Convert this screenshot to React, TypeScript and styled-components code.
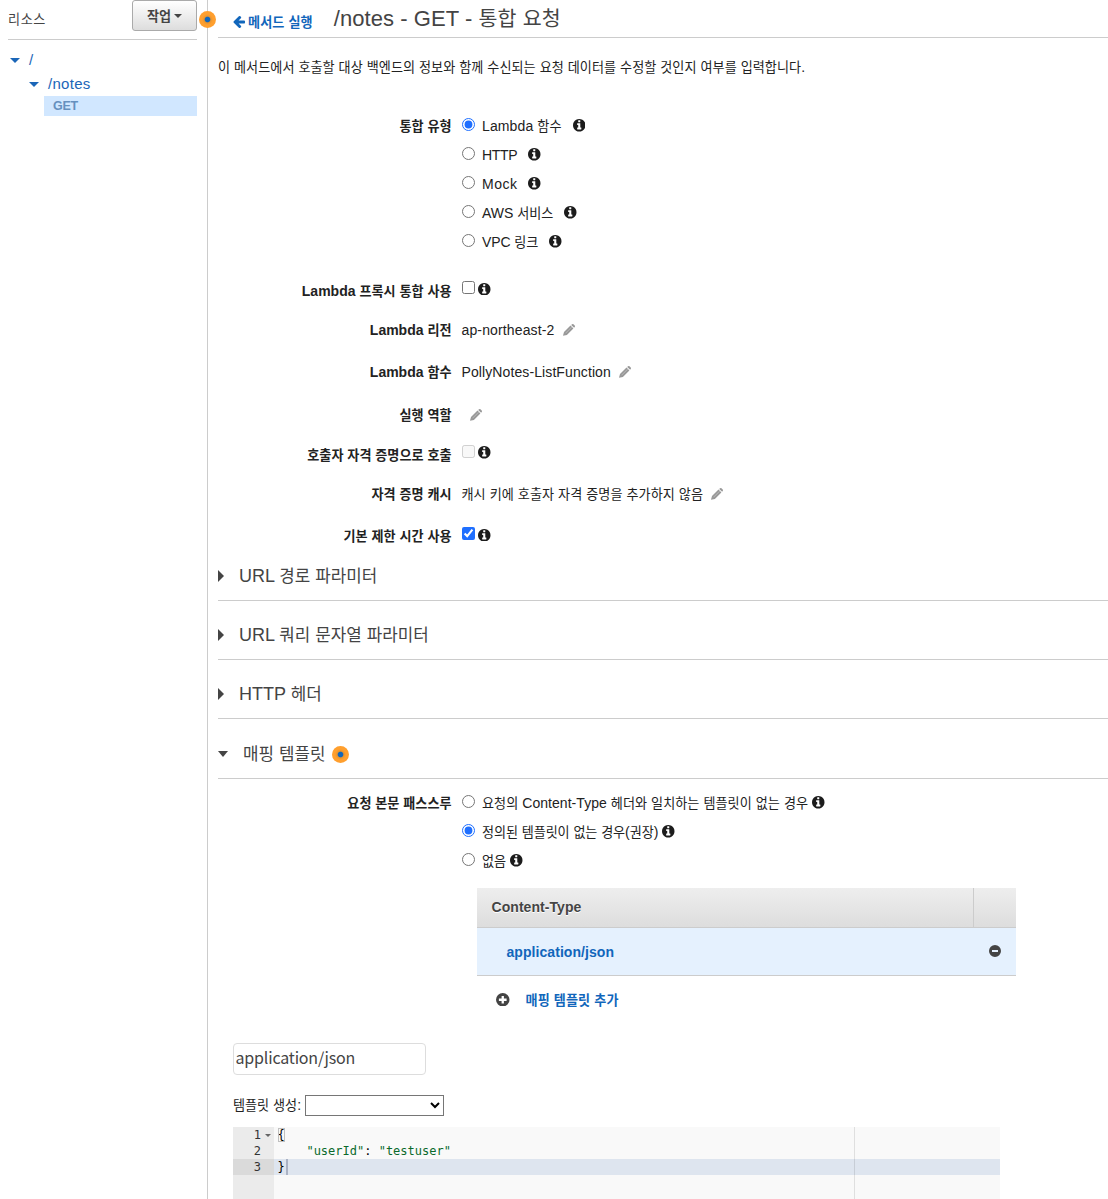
import React from "react";
import styled, { createGlobalStyle, css } from "styled-components";

const GlobalStyle = createGlobalStyle`
  * { box-sizing: border-box; }
  body {
    margin: 0;
    overflow: hidden;
    background: #fff;
    color: #222;
    font-family: "Liberation Sans", "Noto Sans CJK KR", sans-serif;
    font-size: 14px;
    line-height: 20px;
  }
`;

/* Hangul is set slightly smaller than the Latin text around it. */
const Hangul = styled.span`
  font-family: "Noto Sans CJK KR", sans-serif;
  font-size: 0.936em;
  line-height: 1;
`;

const Run = styled.span<{ $spacing?: number }>`
  white-space: pre;
  letter-spacing: ${(p) => p.$spacing ?? 0}px;
`;

function Text({ children, spacing }: { children: string; spacing?: number }) {
  const parts = children.split(/([\uac00-\ud7a3]+)/).filter(Boolean);
  return (
    <Run $spacing={spacing}>
      {parts.map((part, i) =>
        /[\uac00-\ud7a3]/.test(part) ? <Hangul key={i}>{part}</Hangul> : <React.Fragment key={i}>{part}</React.Fragment>
      )}
    </Run>
  );
}

const Icon = styled.svg<{ $size: number; $color?: string }>`
  display: block;
  flex: none;
  width: ${(p) => p.$size}px;
  height: ${(p) => p.$size}px;
  fill: ${(p) => p.$color ?? "currentColor"};
`;

function InfoIcon() {
  return (
    <Icon $size={12.5} $color="#1c1c1c" viewBox="128 128 1536 1536">
      <path d="M1152 1376v-160q0-14-9-23t-23-9h-96v-512q0-14-9-23t-23-9h-320q-14 0-23 9t-9 23v160q0 14 9 23t23 9h96v320h-96q-14 0-23 9t-9 23v160q0 14 9 23t23 9h448q14 0 23-9t9-23zM1024 480v-160q0-14-9-23t-23-9h-192q-14 0-23 9t-9 23v160q0 14 9 23t23 9h192q14 0 23-9t9-23zM1664 896q0 209-103 385.5t-279.5 279.5-385.5 103-385.5-103-279.5-279.5-103-385.5 103-385.5 279.5-279.5 385.5-103 385.5 103 279.5 279.5 103 385.5z" />
    </Icon>
  );
}

function ArrowLeftIcon() {
  return (
    <Icon $size={14} viewBox="0 0 1792 1792">
      <path d="M1664 896v128q0 53-32.5 90.5t-84.5 37.5h-704l293 294q38 36 38 90t-38 90l-75 76q-37 37-90 37-52 0-91-37l-651-652q-37-37-37-90 0-52 37-91l651-650q38-38 91-38 52 0 90 38l75 74q38 38 38 91t-38 91l-293 293h704q52 0 84.5 37.5t32.5 90.5z" transform="translate(0 -64)" />
    </Icon>
  );
}

function PencilIcon() {
  return (
    <Icon $size={12} $color="#999" viewBox="0 0 12 12">
      <path d="M0 11.8 1 8 7.5 1.6 10.4 4.5 3.9 10.9Z" />
      <path d="M8.2.9 9 .3q.8-.6 1.5 0l1.2 1.2q.6.7 0 1.5l-.6.8Z" />
      <path d="M2.6 9.2 8.6 3.2" stroke="#c4c4c4" strokeWidth="0.7" fill="none" />
    </Icon>
  );
}

function RemoveIcon() {
  return (
    <Icon $size={12} $color="#444" viewBox="0 0 12 12">
      <path fillRule="evenodd" d="M6 0a6 6 0 1 1 0 12A6 6 0 0 1 6 0ZM3 4.9v2.2h6V4.9Z" />
    </Icon>
  );
}

function AddIcon() {
  return (
    <Icon $size={13.5} $color="#444" viewBox="0 0 14 14">
      <path fillRule="evenodd" d="M7 0a7 7 0 1 1 0 14A7 7 0 0 1 7 0ZM5.8 3v2.8H3v2.4h2.8V11h2.4V8.2H11V5.8H8.2V3Z" />
    </Icon>
  );
}

const Page = styled.div`
  display: flex;
  height: 1199px;
  overflow: hidden;
`;

const Sidebar = styled.aside`
  position: relative;
  width: 208px;
  flex: none;
  padding: 0 10px 0 8px;
  border-right: 1px solid #ccc;
`;

const SidebarHeader = styled.div`
  display: flex;
  justify-content: space-between;
  align-items: flex-start;
  height: 40px;
  border-bottom: 1px solid #ccc;
  color: #444;
`;

const SidebarTitle = styled.span`
  padding-top: 9px;
`;

const ActionButton = styled.button`
  display: flex;
  align-items: center;
  justify-content: center;
  gap: 3px;
  width: 65px;
  height: 31px;
  padding: 0;
  border: 1px solid #aaa;
  border-radius: 3px;
  background: linear-gradient(#fff, #ddd);
  color: #444;
  font: bold 14px/20px "Liberation Sans", sans-serif;
`;

const Caret = styled.span<{ $dir: "down" | "right"; $w: number; $h: number }>`
  width: 0;
  height: 0;
  flex: none;
  ${(p) =>
    p.$dir === "down"
      ? css`
          border-left: ${p.$w / 2}px solid transparent;
          border-right: ${p.$w / 2}px solid transparent;
          border-top: ${p.$h}px solid currentColor;
        `
      : css`
          border-top: ${p.$h / 2}px solid transparent;
          border-bottom: ${p.$h / 2}px solid transparent;
          border-left: ${p.$w}px solid currentColor;
        `}
`;

const Dot = styled.span`
  display: block;
  width: 17px;
  height: 17px;
  border-radius: 50%;
  background: radial-gradient(circle, #1166bb 2.3px, #e8942e 3.3px, #ff9f2e 5.5px);
`;

const ResizeDot = styled(Dot)`
  position: absolute;
  top: 11px;
  right: -9px;
`;

const Tree = styled.nav`
  display: flex;
  flex-direction: column;
  padding-top: 8px;
  color: #1b66b8;
`;

const TreeItem = styled.div<{ $indent: number }>`
  display: flex;
  align-items: center;
  gap: 9px;
  height: 24px;
  padding-left: ${(p) => p.$indent}px;
  font-size: 15px;
`;

const Method = styled.div`
  height: 20px;
  margin-left: 36px;
  padding-left: 9px;
  background: #d1e7ff;
  color: #6690be;
  font-size: 12.5px;
  font-weight: bold;
  letter-spacing: -0.3px;
`;

const Main = styled.main`
  flex: 1;
  min-width: 0;
  padding-left: 10px;
`;

const PageHeader = styled.header`
  display: flex;
  align-items: center;
  height: 38px;
  padding-left: 14px;
  border-bottom: 1px solid #ccc;
`;

const BackLink = styled.a`
  display: flex;
  align-items: center;
  gap: 2px;
  padding-top: 6px;
  color: #1166bb;
  font-weight: bold;
`;

const Title = styled.h1`
  margin: 0 0 0 21px;
  color: #444;
  font-size: 22px;
  font-weight: normal;
  line-height: 38px;
`;

const Intro = styled.p`
  height: 73px;
  margin: 0;
  padding-top: 19px;
`;

const Field = styled.div<{ $h?: number; $top?: number }>`
  display: grid;
  grid-template-columns: 233.5px 1fr;
  column-gap: 10px;
  align-items: center;
  height: ${(p) => (p.$h ? `${p.$h}px` : "auto")};
  margin-top: ${(p) => p.$top ?? 0}px;
`;

const GroupField = styled(Field)`
  align-items: start;
`;

const Label = styled.div<{ $line?: number }>`
  text-align: right;
  font-weight: bold;
  line-height: ${(p) => p.$line ?? 20}px;
`;

const Value = styled.div<{ $gap?: number }>`
  display: flex;
  align-items: center;
  gap: ${(p) => p.$gap ?? 8}px;
  height: 20px;
`;

const CheckValue = styled(Value)<{ $lift: number }>`
  padding-bottom: ${(p) => p.$lift}px;
`;

const RadioRow = styled.label<{ $gap: number }>`
  display: flex;
  align-items: center;
  gap: ${(p) => p.$gap}px;
  height: 29px;
`;

const Choice = styled.input`
  flex: none;
  width: 13px;
  height: 13px;
  margin: 0;
  accent-color: #1f6fff;
`;

const RadioChoice = styled(Choice)`
  margin: 0 0 2px;
`;

const RadioText = styled.span<{ $gap: number }>`
  margin-left: ${(p) => 7.5 - p.$gap}px;
`;

const CheckInfo = styled.span`
  margin-top: 3px;
`;

const Section = styled.h2<{ $top: number; $gap: number }>`
  display: flex;
  align-items: center;
  gap: ${(p) => p.$gap}px;
  height: ${(p) => p.$top + 37}px;
  margin: 0;
  padding: ${(p) => p.$top}px 0 0;
  border-bottom: 1px solid #ccc;
  color: #444;
  font-size: 18px;
  font-weight: normal;
  line-height: 24px;
  align-items: flex-start;

  & > ${Caret} {
    align-self: flex-start;
    margin-top: ${(p) => (p.$top === 23 ? 9 : 6)}px;
  }
`;

const SectionDot = styled(Dot)`
  margin: 4px 0 0 -8px;
`;

const Table = styled.div`
  width: 539px;
  margin: 13px 0 0 259px;
`;

const TableHead = styled.div`
  display: grid;
  grid-template-columns: 497px 1fr;
  height: 40px;
  border-bottom: 1px solid #ccc;
  background: linear-gradient(#eee, #ddd);
  color: #444;
  font-weight: bold;
  line-height: 38px;
  text-shadow: 0 1px 0 #fff;
`;

const HeadCell = styled.div`
  padding-left: 14.5px;
  border-right: 1px solid #ccc;
`;

const TableRow = styled.div`
  display: flex;
  align-items: center;
  justify-content: space-between;
  height: 48px;
  padding: 0 15px 0 29.5px;
  border-bottom: 1px solid #ccc;
  background: #e5f1fe;
  color: #1166bb;
  font-weight: bold;
`;

const RowAction = styled.span`
  padding-bottom: 1px;
`;

const AddRow = styled.div`
  display: flex;
  align-items: center;
  gap: 16px;
  height: 47px;
  padding-left: 19px;
  color: #1166bb;
  font-weight: bold;
`;

const TemplatePanel = styled.div`
  padding: 20px 0 0 15px;
`;

const TypeInput = styled.input`
  display: block;
  width: 193px;
  height: 32px;
  padding: 0 1.5px 5px;
  border: 1px solid #ddd;
  border-radius: 4px;
  color: #444;
  font: 16px "Noto Sans CJK KR", sans-serif;
  letter-spacing: -0.18px;
`;

const GenerateRow = styled.div`
  display: flex;
  align-items: center;
  gap: 4px;
  height: 21px;
  margin-top: 20px;
`;

const GenerateLabel = styled.span`
  padding-bottom: 2px;
`;

const TemplateSelect = styled.select`
  width: 139px;
  height: 21px;
  border: 1px solid #767676;
  border-radius: 0;
  background: #fff;
`;

const Editor = styled.div`
  position: relative;
  width: 767px;
  height: 120px;
  margin-top: 11px;
  background: linear-gradient(90deg, #ebebeb 41px, #f9f9f9 41px);
  font: 12px/16px "DejaVu Sans Mono", monospace;
`;

const PrintMargin = styled.div`
  position: absolute;
  top: 0;
  bottom: 0;
  left: 621px;
  width: 1px;
  background: rgba(0, 0, 0, 0.1);
`;

const CodeLine = styled.div<{ $active?: boolean }>`
  display: flex;
  height: 16px;
  background: ${(p) => (p.$active ? "linear-gradient(90deg, #dadada 41px, #dee5ef 41px)" : "none")};
`;

const LineNumber = styled.span`
  display: flex;
  align-items: center;
  justify-content: flex-end;
  gap: 4px;
  width: 41px;
  padding-right: 3px;
  color: #333;
`;

const FoldSlot = styled.span`
  display: flex;
  width: 6px;
  color: #666;
`;

const Code = styled.code`
  padding-left: 3.5px;
  white-space: pre;
  color: #000;
  font: inherit;
`;

const Bracket = styled.span`
  outline: 1px solid #c0c0c0;
  outline-offset: -1px;
`;

const Str = styled.span`
  color: #0a6a2c;
`;

const Cursor = styled.span`
  display: inline-block;
  width: 2px;
  height: 16px;
  margin-left: 1px;
  background: #aab2c4;
  vertical-align: top;
`;

type Option = { text: string; spacing?: number };

const integrationTypes: Option[] = [
  { text: "Lambda 함수", spacing: 0.12 },
  { text: "HTTP", spacing: -0.3 },
  { text: "Mock", spacing: 0.5 },
  { text: "AWS 서비스" },
  { text: "VPC 링크", spacing: -0.1 },
];

const passthroughs: Option[] = [
  { text: "요청의 Content-Type 헤더와 일치하는 템플릿이 없는 경우", spacing: 0.05 },
  { text: "정의된 템플릿이 없는 경우(권장)", spacing: -0.08 },
  { text: "없음" },
];

function RadioGroup({ name, options, selected, gap }: { name: string; options: Option[]; selected: number; gap: number }) {
  return (
    <div>
      {options.map((option, i) => (
        <RadioRow key={option.text} $gap={gap}>
          <RadioChoice type="radio" name={name} defaultChecked={i === selected} />
          <RadioText $gap={gap}>
            <Text spacing={option.spacing}>{option.text}</Text>
          </RadioText>
          <InfoIcon />
        </RadioRow>
      ))}
    </div>
  );
}

type CheckProps = { label: string; h: number; top?: number; lift?: number; checked?: boolean; disabled?: boolean };

function CheckField({ label, h, top, lift = 7, checked, disabled }: CheckProps) {
  return (
    <Field $h={h} $top={top}>
      <Label>
        <Text>{label}</Text>
      </Label>
      <CheckValue $gap={3.5} $lift={lift}>
        <Choice type="checkbox" defaultChecked={checked} disabled={disabled} />
        <CheckInfo>
          <InfoIcon />
        </CheckInfo>
      </CheckValue>
    </Field>
  );
}

function EditField({ label, value, h, spacing }: { label: string; value: string; h: number; spacing?: number }) {
  return (
    <Field $h={h}>
      <Label>
        <Text>{label}</Text>
      </Label>
      <Value>
        <Text spacing={spacing}>{value}</Text>
        <PencilIcon />
      </Value>
    </Field>
  );
}

export default function App() {
  return (
    <>
      <GlobalStyle />
      <Page>
        <Sidebar>
          <SidebarHeader>
            <SidebarTitle>
              <Text spacing={0.6}>리소스</Text>
            </SidebarTitle>
            <ActionButton>
              <Text>작업</Text>
              <Caret $dir="down" $w={8} $h={4} />
            </ActionButton>
          </SidebarHeader>
          <ResizeDot />
          <Tree>
            <TreeItem $indent={2}>
              <Caret $dir="down" $w={10} $h={5} />
              <Text spacing={0.3}>/</Text>
            </TreeItem>
            <TreeItem $indent={21}>
              <Caret $dir="down" $w={10} $h={5} />
              <Text spacing={0.3}>/notes</Text>
            </TreeItem>
            <Method>GET</Method>
          </Tree>
        </Sidebar>
        <Main>
          <PageHeader>
            <BackLink>
              <ArrowLeftIcon />
              <Text spacing={0.1}>메서드 실행</Text>
            </BackLink>
            <Title>
              <Text spacing={0.06}>/notes - GET - 통합 요청</Text>
            </Title>
          </PageHeader>
          <Intro>
            <Text spacing={0.04}>이 메서드에서 호출할 대상 백엔드의 정보와 함께 수신되는 요청 데이터를 수정할 것인지 여부를 입력합니다.</Text>
          </Intro>
          <GroupField>
            <Label $line={31}>
              <Text>통합 유형</Text>
            </Label>
            <RadioGroup name="type" options={integrationTypes} selected={0} gap={11} />
          </GroupField>
          <CheckField label="Lambda 프록시 통합 사용" h={40} top={15} />
          <EditField label="Lambda 리전" value="ap-northeast-2" h={38} spacing={0.14} />
          <EditField label="Lambda 함수" value="PollyNotes-ListFunction" h={46} spacing={0.1} />
          <EditField label="실행 역할" value="" h={40} />
          <CheckField label="호출자 자격 증명으로 호출" h={39} disabled />
          <EditField label="자격 증명 캐시" value="캐시 키에 호출자 자격 증명을 추가하지 않음" h={39} spacing={0.05} />
          <CheckField label="기본 제한 시간 사용" h={46} lift={5} checked />
          <Section $top={5} $gap={15}>
            <Caret $dir="right" $w={6} $h={12} />
            <Text>URL 경로 파라미터</Text>
          </Section>
          <Section $top={22} $gap={15}>
            <Caret $dir="right" $w={6} $h={12} />
            <Text>URL 쿼리 문자열 파라미터</Text>
          </Section>
          <Section $top={22} $gap={15}>
            <Caret $dir="right" $w={6} $h={12} />
            <Text>HTTP 헤더</Text>
          </Section>
          <Section $top={23} $gap={15}>
            <Caret $dir="down" $w={10} $h={6} />
            <Text>매핑 템플릿</Text>
            <SectionDot />
          </Section>
          <GroupField $top={9}>
            <Label $line={31}>
              <Text>요청 본문 패스스루</Text>
            </Label>
            <RadioGroup name="passthrough" options={passthroughs} selected={1} gap={4} />
          </GroupField>
          <Table>
            <TableHead>
              <HeadCell>
                <Text spacing={0.06}>Content-Type</Text>
              </HeadCell>
            </TableHead>
            <TableRow>
              <Text spacing={0.06}>application/json</Text>
              <RowAction>
                <RemoveIcon />
              </RowAction>
            </TableRow>
            <AddRow>
              <AddIcon />
              <Text spacing={0.1}>매핑 템플릿 추가</Text>
            </AddRow>
          </Table>
          <TemplatePanel>
            <TypeInput defaultValue="application/json" />
            <GenerateRow>
              <GenerateLabel>
                <Text>템플릿 생성:</Text>
              </GenerateLabel>
              <TemplateSelect />
            </GenerateRow>
            <Editor>
              <CodeLine>
                <LineNumber>
                  1
                  <FoldSlot>
                    <Caret $dir="down" $w={6} $h={3} />
                  </FoldSlot>
                </LineNumber>
                <Code>
                  <Bracket>{"{"}</Bracket>
                </Code>
              </CodeLine>
              <CodeLine>
                <LineNumber>
                  2<FoldSlot />
                </LineNumber>
                <Code>
                  {"    "}
                  <Str>"userId"</Str>: <Str>"testuser"</Str>
                </Code>
              </CodeLine>
              <CodeLine $active>
                <LineNumber>
                  3<FoldSlot />
                </LineNumber>
                <Code>
                  {"}"}
                  <Cursor />
                </Code>
              </CodeLine>
              <PrintMargin />
            </Editor>
          </TemplatePanel>
        </Main>
      </Page>
    </>
  );
}
